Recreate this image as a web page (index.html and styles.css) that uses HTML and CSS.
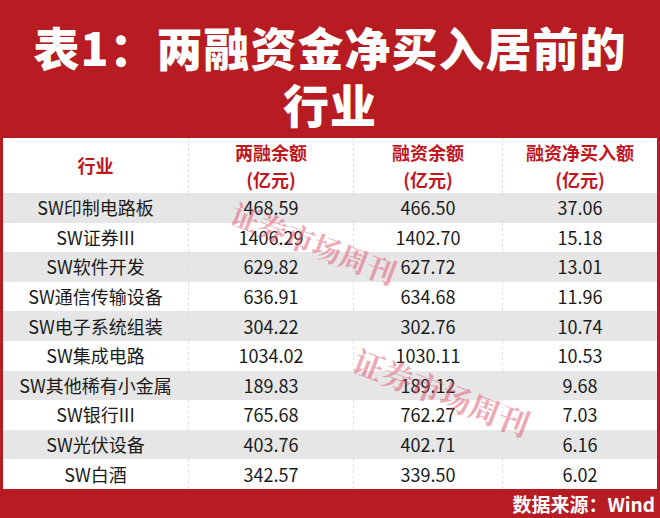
FILE: index.html
```
<!DOCTYPE html>
<html lang="zh">
<head>
<meta charset="utf-8">
<link rel="stylesheet" href="styles.css">
</head>
<body>
<div class="page">
  <div class="title">
    <div class="title-line">表1：两融资金净买入居前的</div>
    <div class="title-line">行业</div>
  </div>
  <div class="table">
    <div class="row head">
      <div class="cell single">行业</div>
      <div class="cell"><span>两融余额</span><span>(亿元)</span></div>
      <div class="cell"><span>融资余额</span><span>(亿元)</span></div>
      <div class="cell"><span>融资净买入额</span><span>(亿元)</span></div>
    </div>
    <div class="row gray"><div class="cell">SW印制电路板</div><div class="cell">468.59</div><div class="cell">466.50</div><div class="cell">37.06</div></div>
    <div class="row"><div class="cell">SW证券III</div><div class="cell">1406.29</div><div class="cell">1402.70</div><div class="cell">15.18</div></div>
    <div class="row gray"><div class="cell">SW软件开发</div><div class="cell">629.82</div><div class="cell">627.72</div><div class="cell">13.01</div></div>
    <div class="row"><div class="cell">SW通信传输设备</div><div class="cell">636.91</div><div class="cell">634.68</div><div class="cell">11.96</div></div>
    <div class="row gray"><div class="cell">SW电子系统组装</div><div class="cell">304.22</div><div class="cell">302.76</div><div class="cell">10.74</div></div>
    <div class="row"><div class="cell">SW集成电路</div><div class="cell">1034.02</div><div class="cell">1030.11</div><div class="cell">10.53</div></div>
    <div class="row gray"><div class="cell">SW其他稀有小金属</div><div class="cell">189.83</div><div class="cell">189.12</div><div class="cell">9.68</div></div>
    <div class="row"><div class="cell">SW银行III</div><div class="cell">765.68</div><div class="cell">762.27</div><div class="cell">7.03</div></div>
    <div class="row gray"><div class="cell">SW光伏设备</div><div class="cell">403.76</div><div class="cell">402.71</div><div class="cell">6.16</div></div>
    <div class="row"><div class="cell">SW白酒</div><div class="cell">342.57</div><div class="cell">339.50</div><div class="cell">6.02</div></div>
    <div class="mark mark-a">证券市场周刊</div>
    <div class="mark mark-b">证券市场周刊</div>
  </div>
  <div class="footer">数据来源：Wind</div>
</div>
</body>
</html>
```
FILE: styles.css
```
html, body {
  margin: 0;
  padding: 0;
}
body {
  background: #b81c23;
  font-family: "Noto Sans CJK SC", "Noto Sans", sans-serif;
}
.page {
  width: 660px;
  height: 518px;
  background: #b81c23;
  display: flex;
  flex-direction: column;
  overflow: hidden;
}
.title {
  height: 138px;
  box-sizing: border-box;
  padding-top: 19px;
  color: #fff;
  text-align: center;
  font-weight: 900;
  font-size: 46px;
  display: flex;
  flex-direction: column;
  gap: 2px;
}
.title-line {
  line-height: 55px;
  height: 55px;
  letter-spacing: 1px;
  white-space: nowrap;
}
.table {
  position: relative;
  margin: 0 3px;
  background: #fff;
  display: flex;
  flex-direction: column;
  overflow: hidden;
}
.row {
  display: grid;
  grid-template-columns: 185px 165px 149px 155px;
  height: 29.6px;
  font-size: 18px;
  color: #1a1a1a;
}
.row.gray {
  background: #e6e6e6;
}
.row.head {
  height: 55px;
  color: #c0171f;
  font-weight: 700;
  font-size: 18px;
}
.cell {
  display: flex;
  flex-direction: column;
  align-items: center;
  justify-content: center;
  line-height: 27px;
  border-left: 1px dashed #e0e0e0;
  white-space: nowrap;
}
.cell:first-child {
  border-left: none;
}
.head .cell {
  border-left-color: #f0d6d8;
}
.mark {
  position: absolute;
  font-family: "Noto Serif CJK SC", "Noto Sans CJK SC", serif;
  font-weight: 700;
  white-space: nowrap;
  color: rgba(224, 84, 110, 0.5);
  transform: rotate(21deg);
  pointer-events: none;
}
.mark-a {
  font-size: 29px;
  left: 224px;
  top: 84px;
}
.mark-b {
  font-size: 31px;
  left: 346px;
  top: 231px;
}
.footer {
  height: 29px;
  flex: none;
  margin-top: auto;
  color: #fff;
  font-weight: 700;
  font-size: 19px;
  line-height: 29px;
  text-align: right;
  padding-right: 5px;
}
```
